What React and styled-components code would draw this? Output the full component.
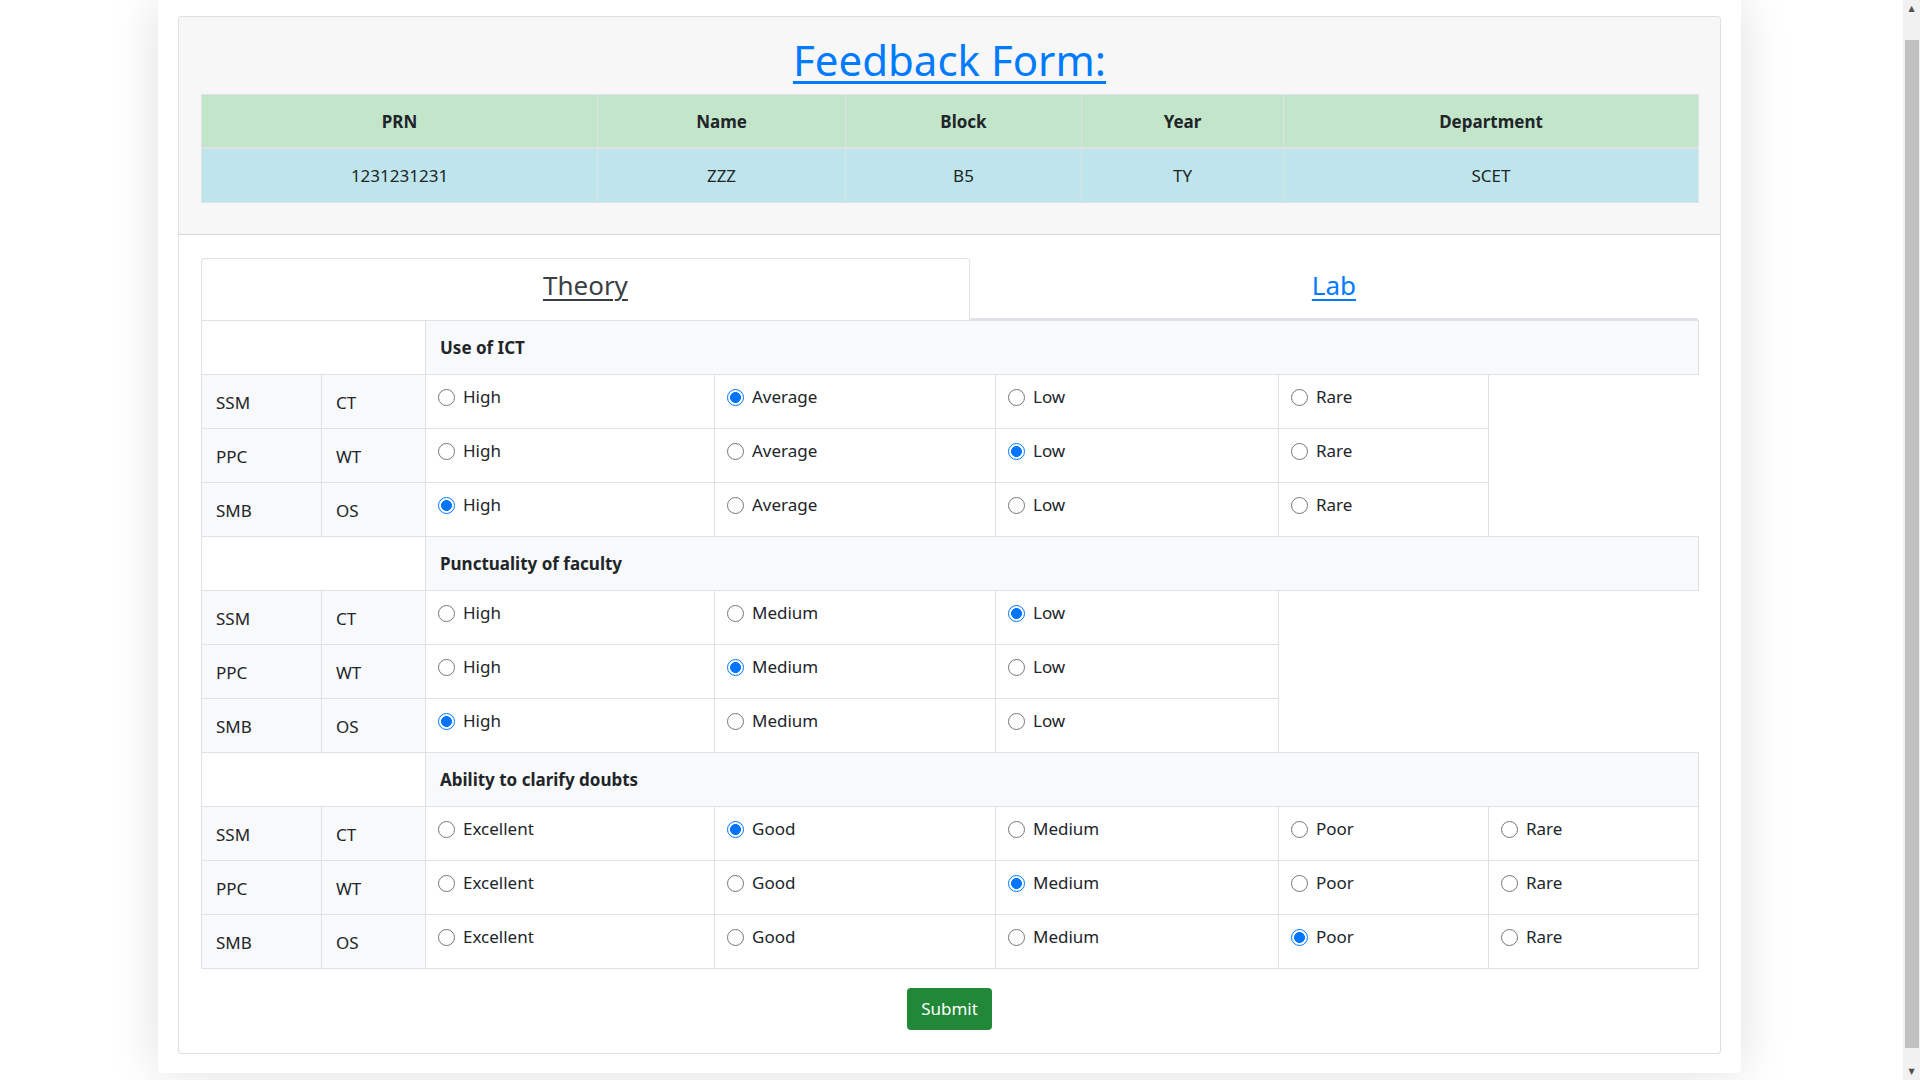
import React from 'react'
import styled, { createGlobalStyle } from 'styled-components'

const GlobalStyle = createGlobalStyle`
  html, body {
    margin: 0;
    padding: 0;
    background: #fff;
    overflow: hidden;
  }
  body {
    font-family: "Noto Sans", "Open Sans", sans-serif;
    color: #212529;
  }
  * {
    box-sizing: border-box;
  }
`

const Screen = styled.div`
  display: flex;
  height: 100vh;
`

const Viewport = styled.div`
  flex: 1 1 auto;
  overflow: hidden;
  padding-right: 4px;
`

const Scrollbar = styled.div`
  flex: 0 0 17px;
  display: flex;
  flex-direction: column;
  background: #f1f1f1;
`

const ScrollArrow = styled.div`
  height: 17px;
  display: flex;
  align-items: center;
  justify-content: center;
  color: #505050;
  font-size: 8px;
  line-height: 1;
  font-family: "DejaVu Sans", sans-serif;
`

const ScrollTrack = styled.div`
  flex: 1 1 auto;
  padding: 23px 1px 15px 2px;
  display: flex;
`

const ScrollThumb = styled.div`
  flex: 1 1 auto;
  background: #c1c1c1;
`

const Sheet = styled.div`
  width: 1583px;
  margin: 0 auto;
  padding: 16px 20px 19px;
  background: #fff;
  border-radius: 0 0 4px 4px;
  box-shadow: 0 0 50px rgba(0, 0, 0, 0.13);
`

const Card = styled.div`
  border: 1px solid rgba(0, 0, 0, 0.125);
  border-radius: 4px;
  background: #fff;
`

const CardHeader = styled.div`
  background: #f7f7f7;
  border-bottom: 1px solid rgba(0, 0, 0, 0.125);
  border-radius: 3px 3px 0 0;
  padding: 18px 22px 31px;
`

const Title = styled.h1`
  margin: 0 0 9px;
  text-align: center;
  font-size: 42px;
  line-height: 50px;
  font-weight: 400;
`

const TitleLink = styled.a`
  color: #007bff;
  text-decoration: underline;
  text-decoration-thickness: 3px;
  text-underline-offset: 5px;
`

const InfoTable = styled.table`
  width: 100%;
  border-collapse: collapse;
  table-layout: fixed;
  font-size: 17px;
`

const InfoHead = styled.th`
  background: #c3e6cb;
  border: 1px solid #dee2e6;
  border-bottom-width: 2px;
  padding: 14px 12px 12px;
  line-height: 26px;
  font-weight: 700;
  text-align: center;
`

const InfoCell = styled.td`
  background: #bee5eb;
  border: 1px solid #dee2e6;
  padding: 13px 12px;
  line-height: 27px;
  text-align: center;
`

const CardBody = styled.div`
  padding: 23px 22px 23px;
  display: flex;
  flex-direction: column;
  align-items: center;
`

const Tabs = styled.div`
  display: flex;
  align-self: stretch;
`

const Tab = styled.div`
  flex: 1 1 auto;
  text-align: center;
  padding: 11px 16px 17px;
  font-size: 26px;
  line-height: 31px;
  border: 1px solid ${p => (p.$active ? '#dee2e6' : 'transparent')};
  border-bottom: ${p => (p.$active ? '0' : '2px solid #dee2e6')};
  border-radius: 4px 4px 0 0;
  background: #fff;
`

const TabLink = styled.a`
  color: ${p => (p.$active ? '#3a3f45' : '#007bff')};
  text-decoration: underline;
  text-decoration-thickness: 2px;
  text-underline-offset: 4px;
`

const FeedbackTable = styled.table`
  align-self: stretch;
  border-collapse: collapse;
  table-layout: fixed;
  width: 100%;
  font-size: 17px;
`

const SectionBlank = styled.td`
  border: 1px solid #dee2e6;
  background: #fff;
`

const SectionTitle = styled.td`
  border: 1px solid #dee2e6;
  background: #f8f9fa;
  padding: 12px 14px;
  line-height: 29px;
  font-weight: 700;
`

const LabelCell = styled.td`
  border: 1px solid #dee2e6;
  background: #f8f9fa;
  padding: 13px 14px 11px;
  line-height: 29px;
`

const OptionCell = styled.td`
  border: 1px solid #dee2e6;
  background: #fff;
  padding: 10px 12px 14px;
  vertical-align: top;
`

const Choice = styled.label`
  display: flex;
  align-items: center;
  gap: 8px;
  height: 24px;
  line-height: 24px;
`

const Radio = styled.input`
  appearance: none;
  flex: 0 0 17px;
  width: 17px;
  height: 17px;
  margin: 0;
  border-radius: 50%;
  border: 1.5px solid #767676;
  background: #fff;

  &:checked {
    border-color: #0075ff;
    background: radial-gradient(circle, #0075ff 0 48%, #fff 54%);
  }
`

const SubmitButton = styled.button`
  margin-top: 19px;
  width: 85px;
  height: 42px;
  border: 0;
  border-radius: 4px;
  background: #218838;
  color: #fff;
  font-family: inherit;
  font-size: 17px;
  line-height: 24px;
`

const info = {
  heads: ['PRN', 'Name', 'Block', 'Year', 'Department'],
  values: ['1231231231', 'ZZZ', 'B5', 'TY', 'SCET'],
  widths: [396, 248, 236, 202, 415],
}

const colWidths = [120, 104, 289, 281, 283, 210, 210]

const sections = [
  {
    title: 'Use of ICT',
    options: ['High', 'Average', 'Low', 'Rare'],
    rows: [['SSM', 'CT', 1], ['PPC', 'WT', 2], ['SMB', 'OS', 0]],
  },
  {
    title: 'Punctuality of faculty',
    options: ['High', 'Medium', 'Low'],
    rows: [['SSM', 'CT', 2], ['PPC', 'WT', 1], ['SMB', 'OS', 0]],
  },
  {
    title: 'Ability to clarify doubts',
    options: ['Excellent', 'Good', 'Medium', 'Poor', 'Rare'],
    rows: [['SSM', 'CT', 1], ['PPC', 'WT', 2], ['SMB', 'OS', 3]],
  },
]

export default function App() {
  return (
    <Screen>
      <GlobalStyle />
      <Viewport>
        <Sheet>
          <Card>
            <CardHeader>
              <Title>
                <TitleLink href="#">Feedback Form:</TitleLink>
              </Title>
              <InfoTable>
                <colgroup>
                  {info.widths.map((w, i) => <col key={i} style={{ width: w }} />)}
                </colgroup>
                <thead>
                  <tr>
                    {info.heads.map(h => <InfoHead key={h}>{h}</InfoHead>)}
                  </tr>
                </thead>
                <tbody>
                  <tr>
                    {info.values.map(v => <InfoCell key={v}>{v}</InfoCell>)}
                  </tr>
                </tbody>
              </InfoTable>
            </CardHeader>
            <CardBody>
              <Tabs>
                <Tab $active><TabLink href="#" $active>Theory</TabLink></Tab>
                <Tab><TabLink href="#">Lab</TabLink></Tab>
              </Tabs>
              <FeedbackTable>
                <colgroup>
                  {colWidths.map((w, i) => <col key={i} style={{ width: w }} />)}
                </colgroup>
                <tbody>
                  {sections.map((s, si) => (
                    <React.Fragment key={s.title}>
                      <tr>
                        <SectionBlank colSpan={2} />
                        <SectionTitle colSpan={5}>{s.title}</SectionTitle>
                      </tr>
                      {s.rows.map(([faculty, subject, picked]) => (
                        <tr key={faculty}>
                          <LabelCell>{faculty}</LabelCell>
                          <LabelCell>{subject}</LabelCell>
                          {s.options.map((o, oi) => (
                            <OptionCell key={o}>
                              <Choice>
                                <Radio
                                  type="radio"
                                  name={`q${si}-${faculty}`}
                                  defaultChecked={oi === picked}
                                />
                                {o}
                              </Choice>
                            </OptionCell>
                          ))}
                        </tr>
                      ))}
                    </React.Fragment>
                  ))}
                </tbody>
              </FeedbackTable>
              <SubmitButton type="button">Submit</SubmitButton>
            </CardBody>
          </Card>
        </Sheet>
      </Viewport>
      <Scrollbar>
        <ScrollArrow>▲</ScrollArrow>
        <ScrollTrack>
          <ScrollThumb />
        </ScrollTrack>
        <ScrollArrow>▼</ScrollArrow>
      </Scrollbar>
    </Screen>
  )
}
